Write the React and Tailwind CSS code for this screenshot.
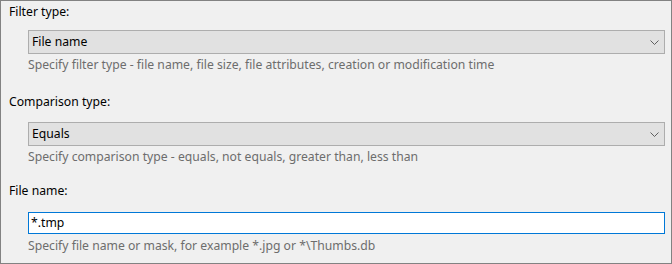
import React from 'react'

function Chevron() {
  return (
    <svg width="9" height="5" viewBox="0 0 9 5" className="shrink-0">
      <path d="M0.5 0.5 L4.5 4.5 L8.5 0.5" fill="none" stroke="#5f5f5f" strokeWidth="1" />
    </svg>
  )
}

function Combo({ value, className }) {
  return (
    <div
      className={
        'ml-[19px] mr-[6px] h-[24px] flex items-center justify-between border border-[#adadad] bg-[#e1e1e1] pl-[3px] pr-[5px] text-black ' +
        className
      }
    >
      <span>{value}</span>
      <Chevron />
    </div>
  )
}

export default function App() {
  return (
    <div className="w-[672px] h-[264px] overflow-hidden border border-[#828282] bg-[#f0f0f0] pl-[8px] pt-[3px] text-[12.2px] leading-[16px] font-['Noto_Sans',Arial,sans-serif]">
      <div className="text-black">Filter type:</div>
      <Combo value="File name" className="mt-[10px]" />
      <div className="mt-[3px] ml-[19px] text-[#6d6d6d]">
        Specify filter type - file name, file size, file attributes, creation or modification time
      </div>

      <div className="mt-[21px] text-black">Comparison type:</div>
      <Combo value="Equals" className="mt-[12px]" />
      <div className="mt-[3px] ml-[19px] text-[#6d6d6d]">
        Specify comparison type - equals, not equals, greater than, less than
      </div>

      <div className="mt-[18px] text-black">File name:</div>
      <div className="mt-[13px] ml-[19px] mr-[6px] h-[22px] flex items-center border border-[#0078d7] bg-white pl-[2px] text-black">
        *.tmp
      </div>
      <div className="mt-[4px] ml-[19px] text-[#6d6d6d]">
        Specify file name or mask, for example *.jpg or *\Thumbs.db
      </div>
    </div>
  )
}
